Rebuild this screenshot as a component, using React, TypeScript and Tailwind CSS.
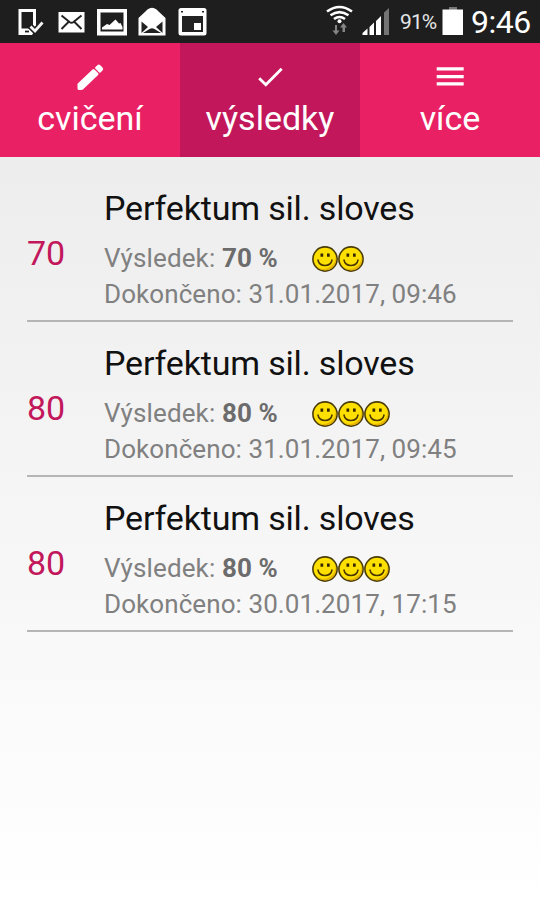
type Result = {
  score: number;
  title: string;
  finished: string;
  smileys: number;
};

const results: Result[] = [
  { score: 70, title: "Perfektum sil. sloves", finished: "31.01.2017, 09:46", smileys: 2 },
  { score: 80, title: "Perfektum sil. sloves", finished: "31.01.2017, 09:45", smileys: 3 },
  { score: 80, title: "Perfektum sil. sloves", finished: "30.01.2017, 17:15", smileys: 3 },
];

export default function App() {
  return (
    <div className="flex h-[900px] w-[540px] flex-col overflow-hidden bg-white font-['Roboto',sans-serif]">
      <StatusBar />

      {/* Tabs */}
      <nav className="grid h-[114px] shrink-0 grid-cols-3 bg-[#e92063] text-white">
        <button className="flex flex-col items-center pt-[18px]">
          <svg viewBox="0 0 32 32" className="h-8 w-8" fill="currentColor">
            <path d="M3.500 22.800 18.500 8.500q1-1 2 0l3.600 3.600q1 1 0 2L9.200 28.200q-.8.800-2 .8H5q-1.500 0-1.500-1.500z" />
            <path d="M21.300 6.200l2-2q1.500-1.500 3 0l2.200 2.200q1.500 1.500 0 3l-2 2q-.7.600-1.400 0l-3.800-3.800q-.7-.700 0-1.400z" />
          </svg>
          <span className="text-[34px] leading-[50px]">cvičení</span>
        </button>
        <button className="flex flex-col items-center bg-[#c2185b] pt-[18px]">
          <svg viewBox="0 0 32 32" className="h-8 w-8" fill="none" stroke="currentColor" strokeWidth="2.800">
            <path d="M5.200 17.300l6.600 6.500L27.700 7.800" />
          </svg>
          <span className="text-[34px] leading-[50px]">výsledky</span>
        </button>
        <button className="flex flex-col items-center pt-[18px]">
          <svg viewBox="0 0 32 32" className="h-8 w-8" fill="currentColor">
            <path d="M2.700 6.200h27v3.300h-27zM2.700 13.900h27v3.300h-27zM2.700 21.200h27v3.300h-27z" />
          </svg>
          <span className="text-[34px] leading-[50px]">více</span>
        </button>
      </nav>

      {/* Results */}
      <main className="flex-1 bg-gradient-to-b from-[#ededed] to-white px-[27px] pt-[10px]">
        {results.map((r) => (
          <article key={r.finished} className="flex h-[155px] border-b-2 border-[#b5b5b5]">
            <div className="w-[77px] pt-[66px] text-[34px] leading-[40px] text-[#c2185b]">{r.score}</div>
            <div className="pt-[21px]">
              <h2 className="text-[34px] leading-[40px] tracking-[-0.170px] text-[#111]">{r.title}</h2>
              <div className="mt-[12px] flex h-[36px] items-center text-[26px] leading-[36px] text-[#808080]">
                <p className="w-[208px] whitespace-nowrap tracking-[0.130px]">
                  Výsledek: <b className="text-[#6c6c6c]">{r.score} %</b>
                </p>
                {Array.from({ length: r.smileys }, (_, i) => (
                  <Smiley key={i} />
                ))}
              </div>
              <p className="text-[26px] leading-[36px] tracking-[0.080px] text-[#808080]">Dokončeno: {r.finished}</p>
            </div>
          </article>
        ))}
      </main>
    </div>
  );
}

function Smiley() {
  return (
    <svg viewBox="0 0 26 26" className="mt-[2px] h-[26px] w-[26px]">
      <circle cx="13" cy="13" r="12.100" fill="#fde000" stroke="#4a3c08" strokeWidth="1.600" />
      <path d="M23.200 8.500A11.200 11.200 0 0 1 5 21a12 12 0 0 0 18.200-12.500z" fill="#e8b400" />
      <path d="M8.500 7.500h2.700v3.200H8.500zM15 7.500h2.700v3.200H15z" fill="#332600" />
      <path d="M5.800 13.500q1.200 6 7.200 6t7.200-6" fill="none" stroke="#4a3500" strokeWidth="1.500" />
    </svg>
  );
}

function StatusBar() {
  return (
    <header className="flex h-[43px] shrink-0 items-center bg-[#1e1e1e] text-white">
      <svg viewBox="0 0 220 43" className="h-[43px] w-[220px]">
        {/* Phone with check */}
        <path fillRule="evenodd" d="M18.500 9H36v20l-4 6H18.500zM21.500 12v16.500h11.500V12z" fill="#fff" />
        <path d="M25 31.500h4" stroke="#1e1e1e" strokeWidth="1.800" />
        <path d="M29.500 25.500l5.500 5.500 8-9" fill="none" stroke="#1e1e1e" strokeWidth="6" />
        <path d="M30.500 26.500l4.500 4.500 7.500-8.500" fill="none" stroke="#f4f4f4" strokeWidth="2.800" />
        {/* Mail */}
        <path d="M58.500 12h26v20.500h-26z" fill="#fff" />
        <path d="M61.500 15.500l8 6.500q2 1.500 4 0l8-6.500M61.500 29l7-7M81.500 29l-7-7" fill="none" stroke="#222" strokeWidth="2" />
        {/* Gallery */}
        <path fillRule="evenodd" d="M97 9h30v26.500H97zM100.500 12.500v19h23v-19z" fill="#fff" />
        <path d="M102 29.500v-2l5-3.500 2.500 1 6-5.500 3.500 4 1.500-.5 2 4v2.500z" fill="#fff" />
        {/* Opened mail */}
        <path d="M138.500 18l9-8.500q4.500-3.500 9 0l9 8.500v17.500h-27z" fill="#fff" />
        <path d="M141.500 21.500l6.500 5.500-6.500 6zM162.500 21.500l-6.500 5.500 6.500 6zM143 33l6.500-4q2.500-1.500 5 0l6.500 4z" fill="#222" />
        {/* Calendar */}
        <rect x="178.500" y="8" width="28" height="27.500" rx="2.500" fill="#fff" />
        <path d="M182 16h21v16h-21zM181 11h2v1.500h-2zM202 11h2v1.500h-2z" fill="#222" />
        <path d="M194 23h7v7h-7z" fill="#fff" />
      </svg>
      <svg viewBox="220 0 180 43" className="h-[43px] w-[180px]">
        {/* Wi-Fi */}
        <g fill="none" stroke="#fff" strokeWidth="2.600">
          <path d="M327 11.500q12.500-9 25 0" />
          <path d="M330.500 15.300q9-6.500 18 0" />
          <path d="M334 19q5.500-4 11 0" />
        </g>
        <circle cx="339.500" cy="21.300" r="2" fill="#fff" />
        <path d="M335 25v5.500h-2.500l3.500 4.500 3.500-4.500H337V25zM342.500 32v-4.500H340l3.500-4.500 3.500 4.500h-2V32z" fill="#858585" />
        {/* Signal */}
        <path d="M362.500 35v-2l5-4.500V35zM369.500 35v-8l4.500-4.500V35zM376 35V21l5-5v19z" fill="#fff" />
        <path d="M384 35V12.500l5-4.500v27z" fill="#747474" />
      </svg>
      <span className="w-[42px] pt-[3px] text-[21px] tracking-[-0.900px] text-[#e6e6e6]">91%</span>
      <svg viewBox="0 0 22 30" className="h-[30px] w-[22px]">
        <path d="M7 0h8v3H7z" fill="#777" />
        <path d="M.500 2.500h20.500v25.500H.500z" fill="#fff" />
      </svg>
      <span className="ml-[7px] text-[32px] tracking-[-0.500px]">9:46</span>
    </header>
  );
}
